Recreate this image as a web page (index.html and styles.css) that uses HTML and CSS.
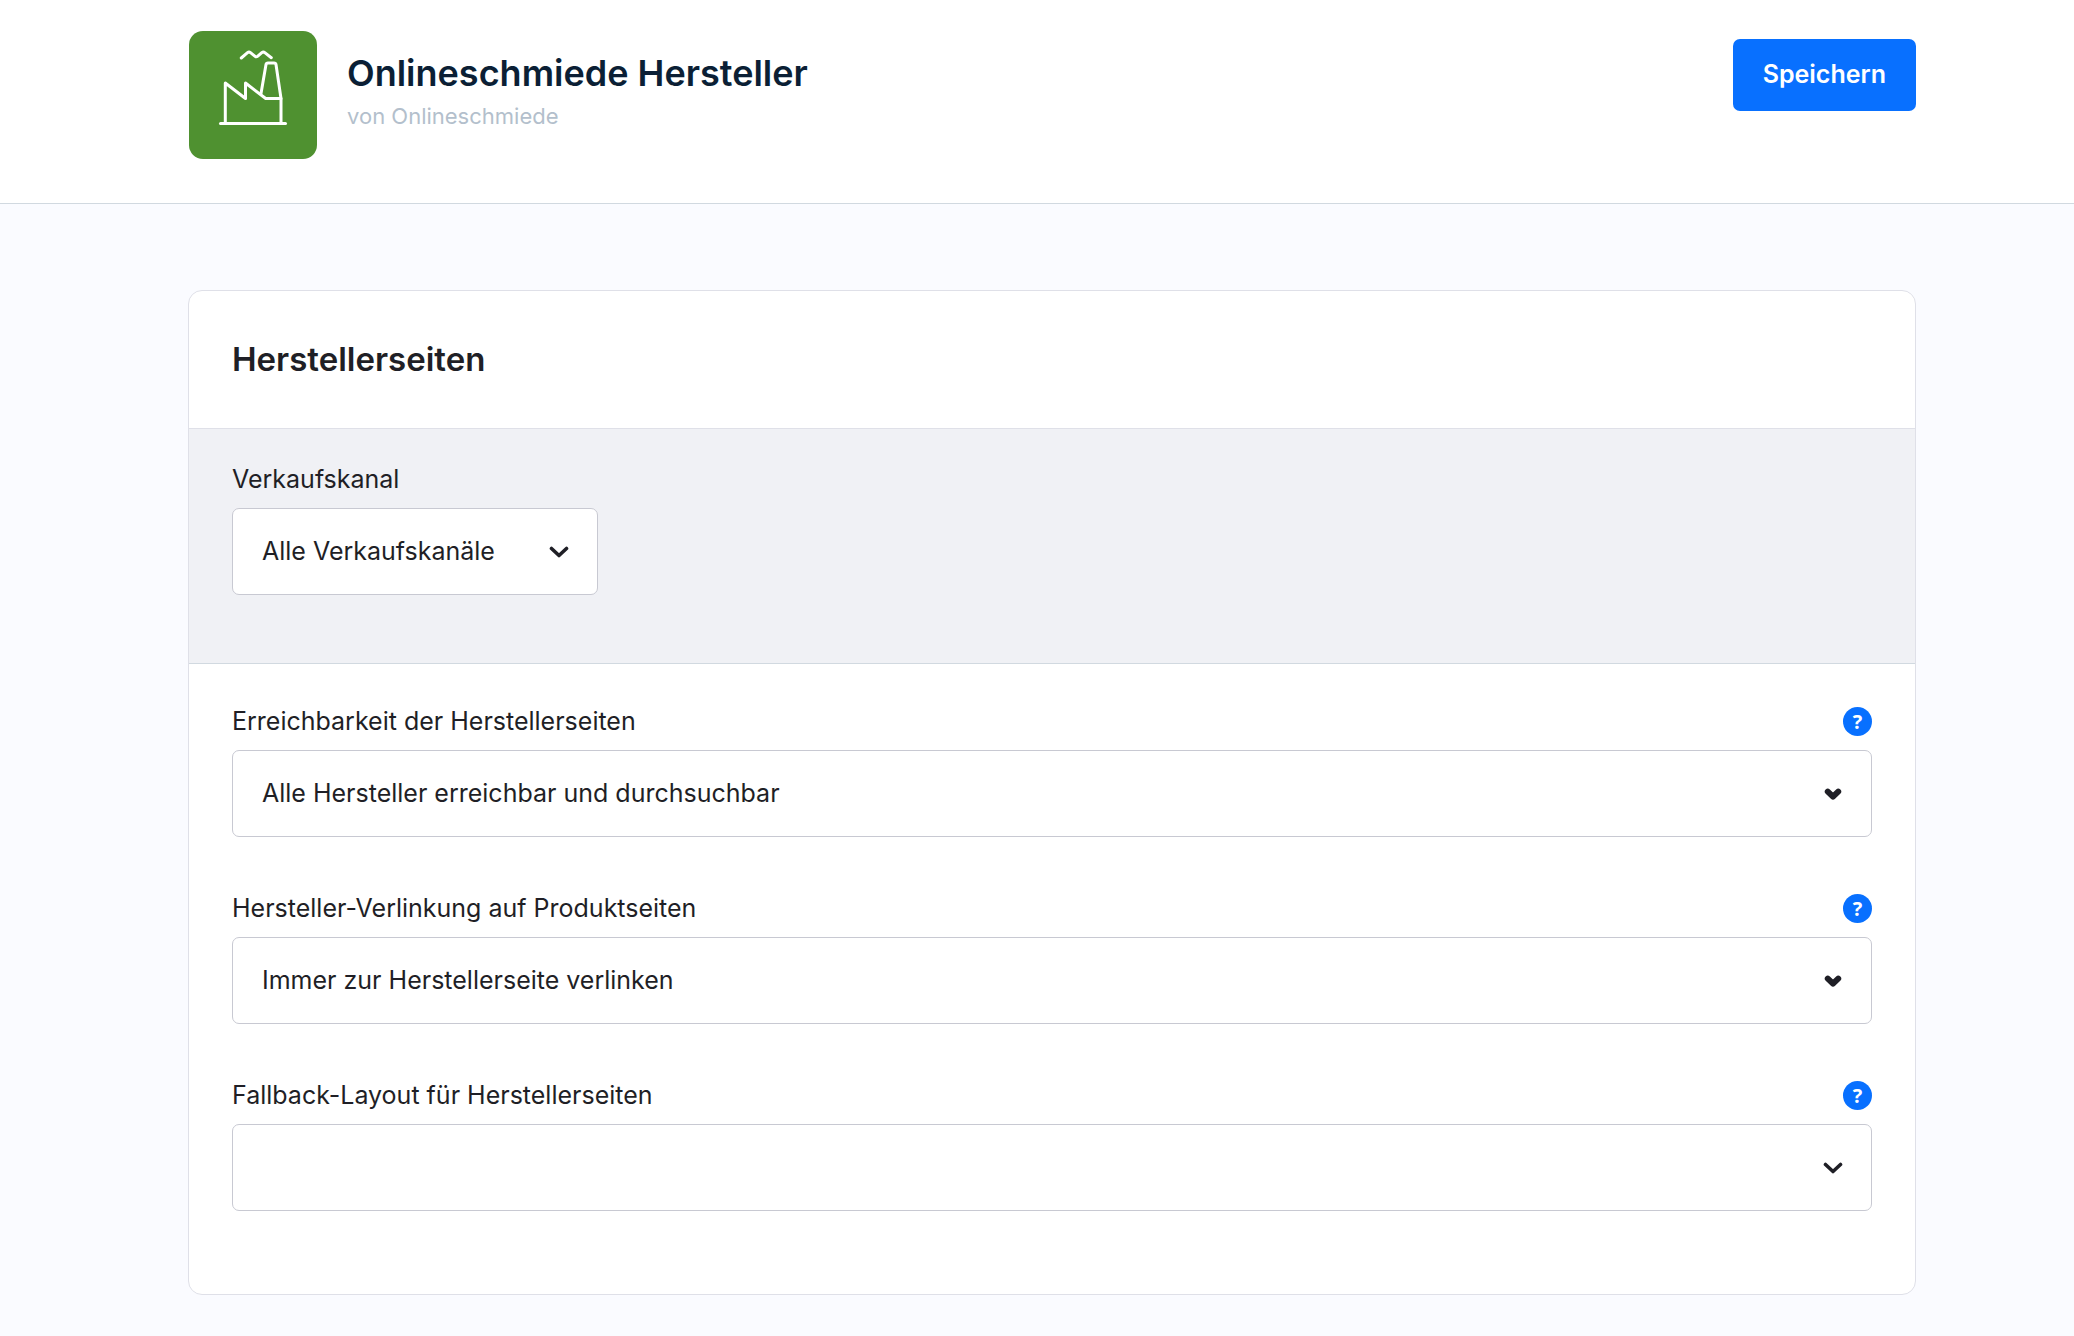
FILE: index.html
```html
<!DOCTYPE html>
<html lang="de">
<head>
  <meta charset="UTF-8" />
  <meta name="viewport" content="width=device-width, initial-scale=1.0" />
  <title>Onlineschmiede Hersteller</title>
  <link rel="stylesheet" href="styles.css">
</head>
<body>
  <header class="page-header">
    <svg class="plugin-logo" viewBox="0 0 128 128" aria-hidden="true">
      <rect width="128" height="128" rx="14" fill="#4f9130" />
      <g fill="none" stroke="#fff" stroke-width="3" stroke-linecap="round" stroke-linejoin="round">
        <path d="M31.5 92.5H96.5" />
        <path d="M36.3 92.5V52L56.5 67.5V52L76.7 67.5H92V92.5" />
        <path d="M72 62.5L77 33.5Q77.3 32 79 32H85Q86.7 32 87 33.5L92 67.5" />
        <path d="M52.3 27L58.5 21.7Q60 20.5 61.5 21.7L65.8 25.2Q67.3 26.4 68.8 25.2L72.8 21.7Q74.3 20.5 75.8 21.7L82.3 26.7" />
      </g>
    </svg>
    <div class="plugin-info">
      <h1>Onlineschmiede Hersteller</h1>
      <p>von Onlineschmiede</p>
    </div>
    <button type="submit" form="config" class="btn-primary">Speichern</button>
  </header>

  <main class="content">
    <form id="config" class="card">
      <div class="card-header">
        <h2>Herstellerseiten</h2>
      </div>

      <div class="channel">
        <div class="field-label">
          <label for="salesChannel">Verkaufskanal</label>
        </div>
        <div class="select-wrap select-small">
          <select id="salesChannel">
            <option>Alle Verkaufskanäle</option>
          </select>
          <svg class="arrow" viewBox="0 0 20 14" aria-hidden="true"><path d="M2.5 3.5L10 10.5L17.5 3.5" /></svg>
        </div>
      </div>

      <div class="fields">
        <div class="field">
          <div class="field-label">
            <label for="availability">Erreichbarkeit der Herstellerseiten</label>
            <button type="button" class="help" aria-label="Hilfe">?</button>
          </div>
          <div class="select-wrap">
            <select id="availability">
              <option>Alle Hersteller erreichbar und durchsuchbar</option>
            </select>
            <svg class="arrow arrow-bold" viewBox="0 0 20 14" aria-hidden="true"><path d="M4.8 4.6L10 9.6L15.2 4.6" /></svg>
          </div>
        </div>

        <div class="field">
          <div class="field-label">
            <label for="linking">Hersteller-Verlinkung auf Produktseiten</label>
            <button type="button" class="help" aria-label="Hilfe">?</button>
          </div>
          <div class="select-wrap">
            <select id="linking">
              <option>Immer zur Herstellerseite verlinken</option>
            </select>
            <svg class="arrow arrow-bold" viewBox="0 0 20 14" aria-hidden="true"><path d="M4.8 4.6L10 9.6L15.2 4.6" /></svg>
          </div>
        </div>

        <div class="field">
          <div class="field-label">
            <label for="fallback">Fallback-Layout für Herstellerseiten</label>
            <button type="button" class="help" aria-label="Hilfe">?</button>
          </div>
          <div class="select-wrap">
            <select id="fallback">
              <option></option>
            </select>
            <svg class="arrow" viewBox="0 0 20 14" aria-hidden="true"><path d="M2.5 3.5L10 10.5L17.5 3.5" /></svg>
          </div>
        </div>
      </div>
    </form>
  </main>
</body>
</html>
```
FILE: styles.css
```css
* {
  box-sizing: border-box;
}
body {
  margin: 0;
  min-height: 100vh;
  font-family: Inter, "Liberation Sans", sans-serif;
  font-size: 25px;
  line-height: 30px;
  background: #fafbff;
  color: #1f1f26;
}
h1, h2, p {
  margin: 0;
}
button, select {
  font-family: inherit;
}
.page-header {
  display: flex;
  align-items: flex-start;
  padding: 31px 158px 44px 189px;
  background: #fff;
  border-bottom: 1px solid #d1d9e0;
}
.plugin-logo {
  width: 128px;
  height: 128px;
  margin-right: 30px;
}
.plugin-info {
  flex: 1;
  padding-top: 20px;
}
.plugin-info h1 {
  font-size: 36px;
  font-weight: 600;
  line-height: 44px;
  color: #0b1f35;
}
.plugin-info p {
  font-size: 22px;
  line-height: 42px;
  color: #b3bfcc;
}
.btn-primary {
  margin-top: 8px;
  padding: 0 30px 2px;
  height: 72px;
  font-size: 25px;
  font-weight: 600;
  color: #fff;
  background: #0870ff;
  border: none;
  border-radius: 7px;
  cursor: pointer;
}
.content {
  padding: 86px 158px 40px 188px;
}
.card {
  background: #fff;
  border: 1px solid #dfe0e8;
  border-radius: 14px;
  overflow: hidden;
}
.card-header {
  padding: 48px 43px 49px;
}
.card-header h2 {
  font-size: 33px;
  font-weight: 600;
  line-height: 40px;
}
.channel {
  padding: 35px 43px 68px;
  background: #f0f1f5;
  border-top: 1px solid #dfe0e8;
  border-bottom: 1px solid #d1d9e0;
}
.fields {
  display: grid;
  gap: 56px;
  padding: 42px 43px 83px;
}
.field-label {
  display: flex;
  align-items: center;
  justify-content: space-between;
  height: 30px;
  margin-bottom: 14px;
}
.select-wrap {
  display: grid;
  align-items: center;
}
.select-small {
  width: 366px;
}
.select-wrap select {
  grid-area: 1 / 1;
  width: 100%;
  height: 87px;
  padding: 0 70px 1px 29px;
  font-size: 25px;
  color: #1f1f26;
  background: #fff;
  border: 1px solid #c8c9d2;
  border-radius: 7px;
  appearance: none;
}
.arrow {
  grid-area: 1 / 1;
  justify-self: end;
  width: 20px;
  height: 14px;
  margin-right: 29px;
  fill: none;
  stroke: #1f1f26;
  stroke-width: 3.6;
  stroke-linecap: round;
  stroke-linejoin: round;
  pointer-events: none;
}
.arrow-bold {
  stroke-width: 6;
}
.help {
  width: 29px;
  height: 29px;
  padding: 0;
  font-family: "Open Sans", sans-serif;
  font-size: 20px;
  font-weight: 700;
  line-height: 29px;
  color: #fff;
  background: #0870ff;
  border: none;
  border-radius: 50%;
  cursor: pointer;
}
```
